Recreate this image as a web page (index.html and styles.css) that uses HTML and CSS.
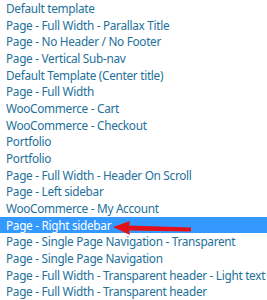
FILE: index.html
```
<!DOCTYPE html>
<html>
<head>
<meta charset="utf-8">
<link rel="stylesheet" href="styles.css">
</head>
<body>
<div class="dropdown">
  <ul class="options">
    <li class="opt">Default template</li>
    <li class="opt">Page - Full Width - Parallax Title</li>
    <li class="opt">Page - No Header / No Footer</li>
    <li class="opt">Page - Vertical Sub-nav</li>
    <li class="opt">Default Template (Center title)</li>
    <li class="opt">Page - Full Width</li>
    <li class="opt">WooCommerce - Cart</li>
    <li class="opt">WooCommerce - Checkout</li>
    <li class="opt">Portfolio</li>
    <li class="opt">Portfolio</li>
    <li class="opt">Page - Full Width - Header On Scroll</li>
    <li class="opt">Page - Left sidebar</li>
    <li class="opt">WooCommerce - My Account</li>
    <li class="opt selected">Page - Right sidebar</li>
    <li class="opt">Page - Single Page Navigation - Transparent</li>
    <li class="opt">Page - Single Page Navigation</li>
    <li class="opt">Page - Full Width - Transparent header - Light text</li>
    <li class="opt">Page - Full Width - Transparent header</li>
  </ul>
  <svg class="arrow" width="90" height="16" viewBox="0 0 90 16">
    <polygon points="0,6 17,0 16,4.5 78,6.5 78,10.5 16,9.5 17,14" fill="#e3101a"/>
  </svg>
</div>
</body>
</html>
```
FILE: styles.css
```
html, body {
  margin: 0;
  padding: 0;
  background: #fff;
}
.dropdown {
  position: relative;
  width: 267px;
  height: 300px;
  overflow: hidden;
}
.options {
  list-style: none;
  margin: 0;
  padding: 0;
}
.opt {
  height: 16.667px;
  line-height: 16.667px;
  padding-left: 6px;
  font-family: "Noto Sans", sans-serif;
  font-size: 11.8px;
  letter-spacing: -0.3px;
  color: #23709a;
  white-space: nowrap;
}
.selected {
  background: #3399ff;
  color: #fff;
}
.arrow {
  position: absolute;
  left: 113px;
  top: 221px;
}
```
